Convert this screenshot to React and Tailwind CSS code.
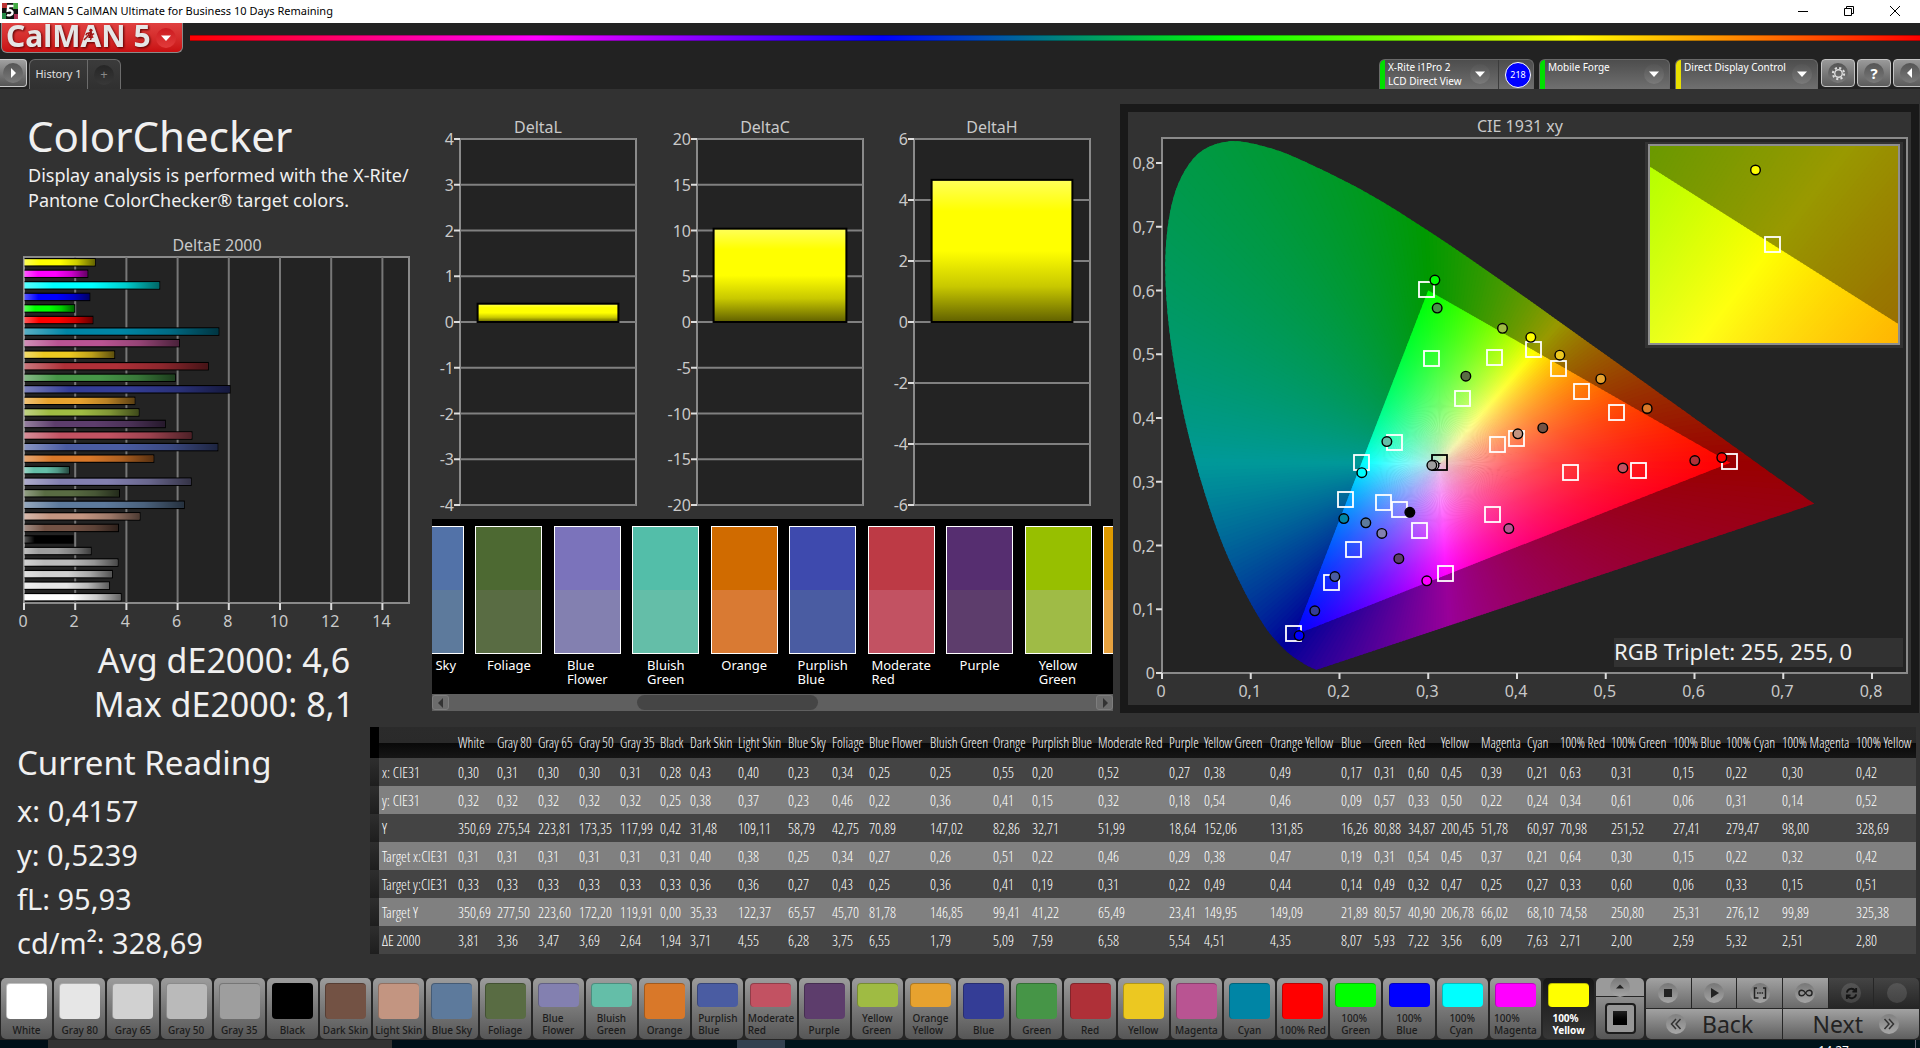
import React from "react";

const COLORS = [
  ["White", "#ffffff", 3.81, 458],
  ["Gray 80", "#e6e6e6", 3.36, 497],
  ["Gray 65", "#d1d1d1", 3.47, 538],
  ["Gray 50", "#bababa", 3.69, 579],
  ["Gray 35", "#9e9e9e", 2.64, 620],
  ["Black", "#000000", 1.94, 660],
  ["Dark Skin", "#735244", 3.71, 690],
  ["Light Skin", "#c39581", 4.55, 738],
  ["Blue Sky", "#5d7a9c", 6.28, 788],
  ["Foliage", "#596c43", 3.75, 832],
  ["Blue\nFlower", "#8380b0", 6.55, 869],
  ["Bluish\nGreen", "#64bea8", 1.79, 930],
  ["Orange", "#d97829", 5.09, 993],
  ["Purplish\nBlue", "#4a5ca2", 7.59, 1032],
  ["Moderate\nRed", "#c25262", 6.58, 1098],
  ["Purple", "#5d3d6c", 5.54, 1169],
  ["Yellow\nGreen", "#9fbb43", 4.51, 1204],
  ["Orange\nYellow", "#e7a22f", 4.35, 1270],
  ["Blue", "#343d96", 8.07, 1341],
  ["Green", "#469547", 5.93, 1374],
  ["Red", "#af3038", 7.22, 1408],
  ["Yellow", "#ecc821", 3.56, 1441],
  ["Magenta", "#b95492", 6.09, 1481],
  ["Cyan", "#0085a5", 7.63, 1527],
  ["100% Red", "#ff0000", 2.71, 1560],
  ["100%\nGreen", "#00ff00", 2.0, 1611],
  ["100%\nBlue", "#0000ff", 2.59, 1673],
  ["100%\nCyan", "#00ffff", 5.32, 1726],
  ["100%\nMagenta", "#ff00ff", 2.51, 1782],
  ["100%\nYellow", "#ffff00", 2.8, 1856],
];

const ROWS = [
  ["x: CIE31", "0,30 0,31 0,30 0,30 0,31 0,28 0,43 0,40 0,23 0,34 0,25 0,25 0,55 0,20 0,52 0,27 0,38 0,49 0,17 0,31 0,60 0,45 0,39 0,21 0,63 0,31 0,15 0,22 0,30 0,42"],
  ["y: CIE31", "0,32 0,32 0,32 0,32 0,32 0,25 0,38 0,37 0,23 0,46 0,22 0,36 0,41 0,15 0,32 0,18 0,54 0,46 0,09 0,57 0,33 0,50 0,22 0,24 0,34 0,61 0,06 0,31 0,14 0,52"],
  ["Y", "350,69 275,54 223,81 173,35 117,99 0,42 31,48 109,11 58,79 42,75 70,89 147,02 82,86 32,71 51,99 18,64 152,06 131,85 16,26 80,88 34,87 200,45 51,78 60,97 70,98 251,52 27,41 279,47 98,00 328,69"],
  ["Target x:CIE31", "0,31 0,31 0,31 0,31 0,31 0,31 0,40 0,38 0,25 0,34 0,27 0,26 0,51 0,22 0,46 0,29 0,38 0,47 0,19 0,31 0,54 0,45 0,37 0,21 0,64 0,30 0,15 0,22 0,32 0,42"],
  ["Target y:CIE31", "0,33 0,33 0,33 0,33 0,33 0,33 0,36 0,36 0,27 0,43 0,25 0,36 0,41 0,19 0,31 0,22 0,49 0,44 0,14 0,49 0,32 0,47 0,25 0,27 0,33 0,60 0,06 0,33 0,15 0,51"],
  ["Target Y", "350,69 277,50 223,60 172,20 119,91 0,00 35,33 122,37 65,57 45,70 81,78 146,85 99,41 41,22 65,49 23,41 149,95 149,09 21,89 80,57 40,90 206,78 66,02 68,10 74,58 250,80 25,31 276,12 99,89 325,38"],
  ["ΔE 2000", "3,81 3,36 3,47 3,69 2,64 1,94 3,71 4,55 6,28 3,75 6,55 1,79 5,09 7,59 6,58 5,54 4,51 4,35 8,07 5,93 7,22 3,56 6,09 7,63 2,71 2,00 2,59 5,32 2,51 2,80"],
];

/* ---------- shared bits ---------- */

function Disc({ children, className = "" }) {
  return (
    <span
      className={
        "flex size-5 shrink-0 items-center justify-center rounded-full bg-linear-to-b from-[#555] to-[#7a7a7a] " + className
      }
    >
      {children}
    </span>
  );
}

function Triangle({ d, className, w = 10, h = 10 }) {
  return (
    <svg viewBox="0 0 10 10" width={w} height={h} className={className} aria-hidden="true">
      <path d={d} fill="currentColor" />
    </svg>
  );
}
const DOWN = "M0 2.5h10L5 8z";

/* ---------- header ---------- */

function TitleBar() {
  return (
    <div className="flex h-[23px] items-center bg-white text-black">
      <svg width="16" height="16" viewBox="0 0 16 16" className="mb-0.5 ml-0.5" aria-hidden="true">
        <rect width="16" height="16" fill="#111" />
        <path d="M0 0h5v5H0z" fill="#b33" />
        <path d="M11 0h5v6h-5z" fill="#4a4" />
        <path d="M0 10h4v6H0z" fill="#284" />
        <path d="M12 11h4v5h-4z" fill="#a35" />
        <path d="M11.500 3H6.300L5.800 7.600C9 6.600 10.800 8 10.500 10c-.3 2.300-3.500 3-5.500 1.700" fill="none" stroke="#fff" strokeWidth="2.400" />
      </svg>
      <span className="mb-0.5 ml-[5px] text-[11px] leading-4">CalMAN 5 CalMAN Ultimate for Business 10 Days Remaining</span>
      <div className="ml-auto flex h-full pb-0.5">
        <button aria-label="Minimize" className="flex w-[46px] items-center justify-center">
          <svg width="10" height="10" viewBox="0 0 10 10"><path d="M0 5.5h10" stroke="#000" /></svg>
        </button>
        <button aria-label="Restore" className="flex w-[46px] items-center justify-center">
          <svg width="10" height="10" viewBox="0 0 10 10" fill="none" stroke="#000">
            <path d="M.5 2.5h7v7h-7zM2.5 2.5v-2h7v7h-2" />
          </svg>
        </button>
        <button aria-label="Close" className="mr-[2px] flex w-[46px] items-center justify-center">
          <svg width="10" height="10" viewBox="0 0 10 10"><path d="M0 0l10 10M10 0L0 10" stroke="#000" /></svg>
        </button>
      </div>
    </div>
  );
}

function DeviceTab({ lines, bar, width, badge, label }) {
  return (
    <div className={"flex h-[30px] rounded-t-md border border-b-0 border-[#6a6a6a] bg-linear-to-b from-[#4d4d4d] to-[#707070] " + width}>
      <button aria-label={label} className="flex min-w-0 flex-1 items-stretch text-left">
        <span className={"w-[5px] shrink-0 rounded-tl-[5px] " + bar} />
        <span className="flex-1 pl-[3px] text-[10px] leading-[14px] whitespace-pre text-white">{lines}</span>
        <Disc className={"mt-1 from-[#444] to-[#6c6c6c] " + (badge ? "mr-2" : "mr-[5px]")}><Triangle d={DOWN} className="text-white" /></Disc>
      </button>
      {badge && (
        <span className="flex items-center border-l border-[#3c3c3c] pr-[2px] pl-[6px]">
          <span className="flex size-[26px] items-center justify-center rounded-full border border-white bg-[#0000ff] text-[9px] leading-3 text-white">{badge}</span>
        </span>
      )}
    </div>
  );
}

function SquareButton({ label, children }) {
  return (
    <button
      aria-label={label}
      className="flex h-[28px] w-[34px] items-center justify-center rounded-[4px] border border-[#c4c4c4] bg-linear-to-b from-[#9a9a9a] to-[#5c5c5c] text-white"
    >
      <Disc>{children}</Disc>
    </button>
  );
}

function Header() {
  return (
    <header className="flex h-[66px] flex-col justify-between bg-[#222]">
      <div className="flex">
        <button
          aria-label="CalMAN 5 menu"
          className="relative ml-px flex h-[30px] w-[182px] items-center justify-between rounded-b-md border border-t-0 border-[#8a8a8a] bg-linear-to-b from-[#e04040] to-[#c90d10] pr-[6px] pl-1"
        >
          <span className="pb-1 text-[30px] leading-[30px] font-bold whitespace-nowrap text-[#e6e6e6] drop-shadow-[1px_1px_1px_#500]">CalMAN 5</span>
          <svg viewBox="0 0 14 14" width="13" height="13" className="absolute top-[5px] left-[81px]" aria-hidden="true">
            <path d="M1 13l4-4 2-4-3 1-1 2M7 5l3 2 2-1M6 8l3 2-1 3" fill="none" stroke="#a01515" strokeWidth="1.500" />
            <circle cx="8.500" cy="2.500" r="1.800" fill="#a01515" />
          </svg>
          <Disc className="from-[#cc1a20] to-[#e23a3a]"><Triangle d={DOWN} className="text-white" /></Disc>
        </button>
        <div className="mt-3 ml-[7px] h-[6px] flex-1 border-y border-black/30 bg-linear-[to_right,#f00,#f0f_20%,#00f_40%,#0f0_60%,#ff0_80%,#f00]" />
      </div>
      <div className="flex items-end">
        <button aria-label="Expand panel" className="mb-[2px] flex h-[28px] w-[27px] items-center justify-center rounded-r-[4px] border border-l-0 border-[#c8c8c8] bg-linear-to-b from-[#a0a0a0] to-[#555] text-white">
          <Disc><Triangle d="M3 0v10l5-5z" /></Disc>
        </button>
        <div className="ml-[2px] flex h-[30px] rounded-t-md border border-b-0 border-[#6c6c6c] bg-linear-to-b from-[#3b3b3b] to-[#303030]">
          <button className="w-[58px] border-r border-[#6c6c6c] text-[11px] text-[#e0e0e0]">History 1</button>
          <button aria-label="Add tab" className="flex w-[32px] items-center justify-center">
            <Disc className="from-[#262626] to-[#383838] text-[13px] text-[#888]">+</Disc>
          </button>
        </div>
        <div className="ml-auto flex gap-[5px]">
          <DeviceTab label="Meter" lines={"X-Rite i1Pro 2\nLCD Direct View"} bar="bg-[#00e000]" width="w-[155px]" badge="218" />
          <DeviceTab label="Source" lines="Mobile Forge" bar="bg-[#00e000]" width="w-[131px]" />
          <DeviceTab label="Display" lines="Direct Display Control" bar="bg-[#e8e000]" width="w-[143px]" />
        </div>
        <div className="-mr-[7px] mb-[2px] ml-[3px] flex gap-[2px]">
          <SquareButton label="Settings">
            <svg viewBox="0 0 16 16" width="15" height="15" aria-hidden="true">
              <circle cx="8" cy="8" r="4" fill="none" stroke="#ddd" strokeWidth="1.500" />
              <circle cx="8" cy="8" r="6" fill="none" stroke="#ddd" strokeWidth="2.200" strokeDasharray="2.300 2.412" />
            </svg>
          </SquareButton>
          <SquareButton label="Help"><span className="text-[15px] font-bold">?</span></SquareButton>
          <SquareButton label="Collapse panel"><Triangle d="M7 0v10L2 5z" /></SquareButton>
        </div>
      </div>
    </header>
  );
}

/* ---------- charts ---------- */

const TEXT = { fontFamily: '"Noto Sans", sans-serif', fontSize: 16, fill: "#c9c9c9" };

function DeltaEChart() {
  const bars = [...COLORS].reverse();
  const x = (v) => 24 + v * 25.6;
  return (
    <svg viewBox="0 0 430 422" className="block h-auto w-full" role="img" aria-label="DeltaE 2000">
      <defs>
        <linearGradient id="barShade">
          <stop offset="0" stopColor="#fff" stopOpacity="0.35" />
          <stop offset="0.22" stopColor="#fff" stopOpacity="0" />
          <stop offset="0.5" stopColor="#000" stopOpacity="0" />
          <stop offset="0.75" stopColor="#000" stopOpacity="0.2" />
          <stop offset="1" stopColor="#000" stopOpacity="0.6" />
        </linearGradient>
      </defs>
      <text {...TEXT} x="217" y="38" textAnchor="middle">DeltaE 2000</text>
      <rect x="24" y="44" width="385" height="346" fill="#232323" stroke="#8a8a8a" strokeWidth="2" />
      {[0, 2, 4, 6, 8, 10, 12, 14].map((v) => (
        <g key={v}>
          <path d={`M${x(v)} 44V390`} stroke="#777" strokeWidth="2" />
          <path d={`M${x(v)} 390V397`} stroke="#ddd" strokeWidth="2" />
          <text {...TEXT} x={x(v) - 1} y="414" textAnchor="middle">{v}</text>
        </g>
      ))}
      {bars.map(([name, color, v], i) => {
        const y = 45 + i * 11.55;
        return (
          <g key={name}>
            <rect x="24" y={y} width={v * 25.6} height="8.500" fill="#000" />
            <rect x="24" y={y + 1.2} width={v * 25.6 - 1} height="6.200" fill={color} />
            <rect x="24" y={y + 1.2} width={v * 25.6 - 1} height="6.200" fill="url(#barShade)" />
          </g>
        );
      })}
      <path d="M24 44V390" stroke="#aaa" strokeWidth="1" />
    </svg>
  );
}

function DeltaPlot({ title, titleX, left, right, ticks, value }) {
  const max = ticks[0];
  const y = (v) => 212 - (v / max) * 183;
  const pad = (right - left) * 0.1;
  return (
    <g>
      <text {...TEXT} x={titleX} y="23" textAnchor="middle">{title}</text>
      <rect x={left} y="29" width={right - left} height="366" fill="#232323" stroke="#8a8a8a" strokeWidth="2" />
      {ticks.map((t) => (
        <g key={t}>
          <path d={`M${left} ${y(t)}H${right}`} stroke="#808080" strokeWidth="2" />
          <path d={`M${left - 6} ${y(t)}H${left}`} stroke="#ddd" strokeWidth="2" />
          <text {...TEXT} x={left - 6} y={y(t) + 6} textAnchor="end">{t}</text>
        </g>
      ))}
      <rect x={left + pad} y={y(value)} width={right - left - 2 * pad} height={212 - y(value)} fill="url(#yellowBar)" stroke="#000" strokeWidth="2" />
    </g>
  );
}

function DeltaCharts() {
  return (
    <svg viewBox="0 0 690 405" className="block h-auto w-full" role="img" aria-label="DeltaL, DeltaC and DeltaH">
      <defs>
        <linearGradient id="yellowBar" x2="0" y2="1">
          <stop offset="0" stopColor="#ffff5a" />
          <stop offset="0.22" stopColor="#ffff00" />
          <stop offset="0.5" stopColor="#ffff00" />
          <stop offset="0.75" stopColor="#c8c800" />
          <stop offset="1" stopColor="#606000" />
        </linearGradient>
      </defs>
      <DeltaPlot title="DeltaL" titleX={108} left={30} right={206} ticks={[4, 3, 2, 1, 0, -1, -2, -3, -4]} value={0.4} />
      <DeltaPlot title="DeltaC" titleX={335} left={267} right={433} ticks={[20, 15, 10, 5, 0, -5, -10, -15, -20]} value={10.2} />
      <DeltaPlot title="DeltaH" titleX={562} left={484} right={660} ticks={[6, 4, 2, 0, -2, -4, -6]} value={4.66} />
    </svg>
  );
}

/* ---------- chromaticity diagram ---------- */

const px = (x) => 34 + x * 887.5;
const py = (y) => 561 - y * 637.5;
const WP = [0.3127, 0.329];
const LOCUS = [
  [0.1741, 0.005], [0.1644, 0.0109], [0.1566, 0.0177], [0.144, 0.0297], [0.1241, 0.0578], [0.1096, 0.0868],
  [0.0913, 0.1327], [0.0687, 0.2007], [0.0454, 0.295], [0.0235, 0.4127], [0.0082, 0.5384], [0.0039, 0.6548],
  [0.0139, 0.7502], [0.0389, 0.812], [0.0743, 0.8338], [0.1142, 0.8262], [0.1547, 0.8059], [0.2296, 0.7543],
  [0.3016, 0.6923], [0.3731, 0.6245], [0.4441, 0.5547], [0.5125, 0.4866], [0.5752, 0.4242], [0.627, 0.3725],
  [0.6915, 0.3083], [0.7347, 0.2653],
];

function smoothPath(points) {
  const p = points.map(([x, y]) => [px(x), py(y)]);
  let d = `M${p[0]}`;
  for (let i = 0; i < p.length - 1; i++) {
    const a = p[Math.max(i - 1, 0)], b = p[i], c = p[i + 1], e = p[Math.min(i + 2, p.length - 1)];
    d += `C${b[0] + (c[0] - a[0]) / 6} ${b[1] + (c[1] - a[1]) / 6} ${c[0] - (e[0] - b[0]) / 6} ${c[1] - (e[1] - b[1]) / 6} ${c[0]} ${c[1]}`;
  }
  return d + "Z";
}

function linearRgb(x, y) {
  const z = 1 - x - y;
  return [3.2406 * x - 1.5372 * y - 0.4986 * z, -0.9689 * x + 1.8758 * y + 0.0415 * z, 0.0557 * x - 0.204 * y + 1.057 * z];
}

function css(rgb, level) {
  const c = rgb.map((v) => Math.max(v, 0));
  const m = Math.max(...c);
  return `rgb(${c.map((v) => Math.round((v / m) * level)).join(",")})`;
}

function Gamut({ id, from, to, step }) {
  const cx = px(WP[0]), cy = py(WP[1]);
  const base = linearRgb(...WP);
  const rays = [];
  for (let a = from; a < to; a += step) {
    const mid = ((a + step / 2) * Math.PI) / 180;
    const ux = Math.cos(mid), uy = -Math.sin(mid);
    const far = linearRgb(WP[0] + ux / 887.5, WP[1] - uy / 637.5);
    const slope = far.map((v, i) => v - base[i]);
    const edge = Math.min(...slope.map((s, i) => (s < 0 ? -base[i] / s : Infinity)));
    const at = (t) => base.map((v, i) => v + slope[i] * t);
    const a0 = ((a - step * 0.3) * Math.PI) / 180, a1 = ((a + step * 1.3) * Math.PI) / 180;
    const R = 800;
    rays.push({
      key: a,
      points: `${cx},${cy} ${cx + R * Math.cos(a0)},${cy - R * Math.sin(a0)} ${cx + R * Math.cos(a1)},${cy - R * Math.sin(a1)}`,
      dim: css(at(edge), 153),
      x2: cx + ux * edge,
      y2: cy + uy * edge,
      stops: [0, 0.12, 0.25, 0.4, 0.6, 0.8, 1].map((f) => [f, css(at(edge * f), 255)]),
    });
  }
  const tri = [[0.64, 0.33], [0.3, 0.6], [0.15, 0.06]].map(([x, y]) => `${px(x)},${py(y)}`).join(" ");
  return (
    <g>
      <defs>
        <clipPath id={id + "Locus"}><path d={smoothPath(LOCUS)} /></clipPath>
        <clipPath id={id + "Tri"}><polygon points={tri} /></clipPath>
        {rays.map((r, i) => (
          <linearGradient key={r.key} id={`${id}g${i}`} gradientUnits="userSpaceOnUse" x1={cx} y1={cy} x2={r.x2} y2={r.y2}>
            {r.stops.map(([o, c]) => <stop key={o} offset={o} stopColor={c} />)}
          </linearGradient>
        ))}
      </defs>
      <g clipPath={`url(#${id}Locus)`}>
        {rays.map((r) => <polygon key={r.key} points={r.points} fill={r.dim} />)}
      </g>
      <g clipPath={`url(#${id}Tri)`}>
        {rays.map((r, i) => <polygon key={r.key} points={r.points} fill={`url(#${id}g${i})`} />)}
      </g>
    </g>
  );
}

const TARGETS = [
  [0.298, 0.603], [0.3035, 0.4936], [0.3745, 0.4955], [0.3384, 0.4308], [0.2614, 0.363], [0.2242, 0.3307],
  [0.2066, 0.2728], [0.249, 0.2684], [0.2667, 0.2569], [0.2896, 0.2239], [0.2156, 0.194], [0.1908, 0.1427],
  [0.148, 0.0634], [0.3192, 0.1562], [0.3722, 0.2495], [0.3778, 0.3587], [0.3989, 0.368], [0.4184, 0.5076],
  [0.4466, 0.4778], [0.4725, 0.4424], [0.5119, 0.4101], [0.4601, 0.3148], [0.5367, 0.319], [0.6389, 0.3332],
];
const READINGS = [
  [0.3069, 0.6163, "#00ff00"], [0.3095, 0.5724, "#469547"], [0.3831, 0.5407, "#9fbb43"], [0.3418, 0.4656, "#596c43"],
  [0.2528, 0.363, "#64bea8"], [0.2246, 0.3143, "#00ffff"], [0.2043, 0.2422, "#0085a5"], [0.2291, 0.2355, "#5d7a9c"],
  [0.2471, 0.219, "#8380b0"], [0.2787, 0.252, "#000000"], [0.2663, 0.1794, "#5d3d6c"], [0.1942, 0.1512, "#4a5ca2"],
  [0.1716, 0.0976, "#343d96"], [0.154, 0.0587, "#0000ff"], [0.2978, 0.1446, "#ff00ff"], [0.3902, 0.2265, "#b95492"],
  [0.4004, 0.3752, "#c39581"], [0.306, 0.326, "#d1d1d1"], [0.3035, 0.3258, "#9e9e9e"], [0.415, 0.5266, "#ffff00"],
  [0.4477, 0.4985, "#ecc821"], [0.4939, 0.4613, "#e7a22f"], [0.5461, 0.4149, "#d97829"], [0.4285, 0.3844, "#735244"],
  [0.5187, 0.3216, "#c25262"], [0.5998, 0.3332, "#af3038"], [0.6302, 0.3379, "#ff0000"],
];

function Target({ x, y, color = "#fff" }) {
  return <rect x={Math.round(x) - 7} y={Math.round(y) - 7} width="15" height="15" fill="none" stroke={color} strokeWidth="1.800" />;
}
function Reading({ x, y, color }) {
  return <circle cx={x + 0.5} cy={y} r="4.800" fill={color} stroke="#000" strokeWidth="1.400" />;
}

function CieChart() {
  return (
    <svg viewBox="0 0 783 593" className="block h-auto w-full" role="img" aria-label="CIE 1931 xy">
      <text {...TEXT} x="392" y="20" textAnchor="middle">CIE 1931 xy</text>
      <rect x="34" y="26" width="745" height="535" fill="#232323" stroke="#8a8a8a" strokeWidth="2" />
      {[0, 1, 2, 3, 4, 5, 6, 7, 8].map((n) => {
        const label = n === 0 ? "0" : `0,${n}`;
        return (
          <g key={n}>
            <path d={`M${px(n / 10)} 561v6M28 ${py(n / 10)}h6`} stroke="#ddd" strokeWidth="2" />
            <text {...TEXT} x={px(n / 10) - 1} y="585" textAnchor="middle">{label}</text>
            <text {...TEXT} x="27" y={py(n / 10) + 6} textAnchor="end">{label}</text>
          </g>
        );
      })}
      <Gamut id="main" from={0} to={360} step={1} />
      {TARGETS.map(([x, y]) => <Target key={`${x},${y}`} x={px(x)} y={py(y)} />)}
      <Target x={px(0.3125)} y={py(0.3307)} color="#000" />
      {READINGS.map(([x, y, c]) => <Reading key={`${x},${y}`} x={px(x)} y={py(y)} color={c} />)}

      <rect x="517" y="30" width="258" height="206" fill="#323232" />
      <clipPath id="inset"><rect x="521" y="34" width="250" height="199" /></clipPath>
      <g clipPath="url(#inset)">
        <g transform={`translate(644 132) scale(5.500 6.100) translate(${-px(0.4193)} ${-py(0.5053)})`}>
          <Gamut id="zoom" from={20} to={100} step={0.25} />
        </g>
      </g>
      <rect x="521" y="33" width="250" height="199" fill="none" stroke="#8e8e8e" strokeWidth="2" />
      <Target x={644} y={132} />
      <Reading x={627} y={58} color="#ffff00" />

      <rect x="486" y="526" width="289" height="29" fill="#323232" />
      <text {...TEXT} x="486" y="548" style={{ fontSize: 22 }} fill="#f0f0f0">RGB Triplet: 255, 255, 0</text>
    </svg>
  );
}

/* ---------- swatch strip ---------- */

const SWATCHES = [
  ["Blue Sky", "#5272a8", "#5d7a9c"], ["Foliage", "#4d6932", "#596c43"], ["Blue\nFlower", "#7b73bb", "#8380b0"],
  ["Bluish\nGreen", "#53bea9", "#64bea8"], ["Orange", "#d06b00", "#d97a33"], ["Purplish\nBlue", "#3e4aae", "#4a5ca2"],
  ["Moderate\nRed", "#bd3a45", "#c25262"], ["Purple", "#562e70", "#5d3d6c"], ["Yellow\nGreen", "#97bf00", "#9fbb46"],
  ["Orange\nYellow", "#dd9900", "#e7a23f"],
];

function SwatchStrip() {
  return (
    <div className="mt-1 mr-[7px] ml-[2px]">
      <div className="overflow-hidden bg-black pt-[7px]">
        <ul className="-ml-[35px] flex h-[168px] w-[773px] justify-between">
          {SWATCHES.map(([name, top, bottom]) => (
            <li key={name} className="flex w-[67px] shrink-0 flex-col items-center">
              <span className="flex h-[128px] w-full flex-col border border-white">
                <span className="flex-1" style={{ background: top }} />
                <span className="flex-1" style={{ background: bottom }} />
              </span>
              <span className="mt-1 text-[13px] leading-[14px] whitespace-pre text-white">{name}</span>
            </li>
          ))}
        </ul>
      </div>
      <div className="flex h-[17px] items-center justify-between bg-[#5f5f5f]">
        <button aria-label="Scroll left" className="flex h-[15px] w-[17px] items-center justify-center rounded-[3px] border border-[#7d7d7d] bg-[#6c6c6c] text-[#333]">
          <Triangle d="M7 0v10L2 5z" />
        </button>
        <div className="flex h-[15px] flex-1">
          <div className="ml-[29%] w-[28%] rounded-lg bg-[#454545]" />
        </div>
        <button aria-label="Scroll right" className="flex h-[15px] w-[17px] items-center justify-center rounded-[3px] border border-[#7d7d7d] bg-[#6c6c6c] text-[#333]">
          <Triangle d="M3 0v10l5-5z" />
        </button>
      </div>
    </div>
  );
}

/* ---------- results table ---------- */

const TABLE_WIDTH = 1546;
const STARTS = COLORS.map((c) => c[3] - 3);
const WIDTHS = [9, 76, ...STARTS.map((s, i) => (STARTS[i + 1] ?? 1916) - s)];

function ResultsTable() {
  return (
    <table className="mr-1 min-w-0 flex-1 table-fixed border-collapse self-start text-left font-['Open_Sans_Condensed_Light','Open_Sans_Condensed','Open_Sans',sans-serif] text-[15px] whitespace-nowrap text-white">
      <colgroup>
        {WIDTHS.map((w, i) => <col key={i} style={{ width: `${(w / TABLE_WIDTH) * 100}%` }} />)}
      </colgroup>
      <thead>
        <tr className="h-[31px] bg-linear-[to_bottom,#2b2b2b,#2a2a2a_50%,#080808_50%,#161616] text-[14px]">
          <td className="bg-black p-0" />
          <td className="p-0" />
          {COLORS.map(([name]) => (
            <th key={name} scope="col" className="p-0 pl-[3px] font-normal">{name.replace("\n", " ")}</th>
          ))}
        </tr>
      </thead>
      <tbody>
        {ROWS.map(([name, values]) => (
          <tr key={name} className="h-[28px] bg-[#444] even:bg-[#808080]">
            <td className="bg-linear-to-b from-[#2e2e2e] to-[#1e1e1e] p-0" />
            <th scope="row" className="p-0 pl-[3px] font-normal">{name}</th>
            {values.split(" ").map((v, i) => <td key={i} className="p-0 pl-[3px]">{v}</td>)}
          </tr>
        ))}
      </tbody>
    </table>
  );
}

/* ---------- bottom bar ---------- */

function PatchButton({ name, color, active }) {
  const two = name.includes("\n");
  return (
    <button
      aria-pressed={active}
      className={
        "flex h-[61px] min-w-0 flex-1 flex-col items-center justify-between overflow-hidden rounded-[5px] pt-[5px] pb-[3px] " +
        (active ? "bg-linear-to-b from-[#161616] to-[#363636] font-bold text-white" : "bg-linear-to-b from-[#9c9c9c] to-[#565656] font-medium text-[#1c1c1c]")
      }
    >
      <span
        className={"w-[41px] shrink-0 rounded-[4px] border-t border-l border-black/25 " + (two ? "h-6" : "h-9")}
        style={{ background: color }}
      />
      <span className="text-left text-[10px] leading-3 whitespace-pre">{name}</span>
    </button>
  );
}

function ToolButton({ label, dim, children }) {
  return (
    <button
      aria-label={label}
      className={
        "flex flex-1 items-center justify-center text-[#222] " +
        (dim ? "bg-linear-to-b from-[#444] to-[#262626]" : "bg-linear-to-b from-[#a2a2a2] to-[#6a6a6a]")
      }
    >
      <Disc className={dim ? "from-[#2c2c2c] to-[#444]" : "from-[#777] to-[#a5a5a5]"}>{children}</Disc>
    </button>
  );
}

function Chevrons({ flip }) {
  return (
    <svg viewBox="0 0 14 14" width="14" height="14" className={flip ? "rotate-180" : ""} aria-hidden="true">
      <path d="M7 2L2.500 7 7 12M11.500 2L7 7l4.500 5" fill="none" stroke="#333" strokeWidth="1.500" />
    </svg>
  );
}

function BottomBar() {
  return (
    <footer className="flex h-[62px] gap-[2px] bg-[#262626] px-px pb-px">
      <div className="flex min-w-0 flex-1 gap-[2px]">
        {COLORS.map(([name, color], i) => <PatchButton key={name} name={name} color={color} active={i === COLORS.length - 1} />)}
      </div>
      <div className="flex w-[48px] flex-col gap-px overflow-hidden rounded-[5px]">
        <button aria-label="Show more" className="flex h-[18px] items-center justify-center bg-[#9a9a9a] text-[#222]">
          <Disc className="size-4 from-[#777] to-[#a5a5a5]"><Triangle d="M0 7h10L5 2z" w={8} h={8} /></Disc>
        </button>
        <button aria-label="Pattern window" className="flex flex-1 items-center justify-center bg-linear-to-b from-[#8e8e8e] to-[#555]">
          <span className="flex size-[31px] items-center justify-center rounded-[4px] border-2 border-[#1c1c1c] bg-[#969696]">
            <span className="size-[14px] bg-linear-to-b from-[#222] to-black" />
          </span>
        </button>
      </div>
      <div className="flex w-[273px] flex-col gap-px overflow-hidden rounded-[5px]">
        <div className="flex h-[30px] gap-px">
          <ToolButton label="Stop"><span className="size-2 bg-[#222]" /></ToolButton>
          <ToolButton label="Play"><Triangle d="M2 0v10l8-5z" /></ToolButton>
          <ToolButton label="Read series">
            <svg viewBox="0 0 14 12" width="14" height="12" fill="none" stroke="#222" strokeWidth="1.500">
              <path d="M4 1H1.500v10h4M10 1h2.500v10H10M4 6h1.500M6.300 6h1.500M8.600 6h1.500" />
            </svg>
          </ToolButton>
          <ToolButton label="Continuous">
            <svg viewBox="0 0 16 8" width="15" height="8" fill="none" stroke="#222" strokeWidth="1.500">
              <path d="M8 4C6.500 1.500 5.500 1 4 1a3 3 0 0 0 0 6c1.500 0 2.500-.5 4-3s2.500-3 4-3a3 3 0 0 1 0 6c-1.500 0-2.500-.5-4-3z" />
            </svg>
          </ToolButton>
          <ToolButton label="Refresh" dim>
            <svg viewBox="0 0 14 14" width="13" height="13" fill="none" stroke="#151515" strokeWidth="2">
              <path d="M2 6a5 5 0 0 1 9-2M12 8a5 5 0 0 1-9 2M12 1v4H8M2 13V9h4" />
            </svg>
          </ToolButton>
          <ToolButton label="Blank" dim />
        </div>
        <div className="flex flex-1 gap-px text-[23px] leading-none text-[#222]">
          <button className="flex flex-1 items-center gap-4 bg-linear-to-b from-[#a2a2a2] to-[#5f5f5f] pl-5">
            <Disc className="from-[#808080] to-[#a8a8a8]"><Chevrons /></Disc>
            Back
          </button>
          <button className="flex flex-1 items-center justify-end gap-4 bg-linear-to-b from-[#a2a2a2] to-[#5f5f5f] pr-5">
            Next
            <Disc className="from-[#808080] to-[#a8a8a8]"><Chevrons flip /></Disc>
          </button>
        </div>
      </div>
    </footer>
  );
}

export default function App() {
  return (
    <div className="flex min-h-screen flex-col overflow-x-clip bg-[#222] font-['Noto_Sans',sans-serif]">
      <TitleBar />
      <Header />
      <main className="flex-1 bg-[#323232] text-[#f0f0f0]">
        <div className="grid grid-cols-[430fr_690fr_800fr]">
          <section className="min-w-0 pt-[21px]">
            <h1 className="pl-[27px] text-[42px] leading-[52px]">ColorChecker</h1>
            <p className="pt-px pl-7 text-[18px] leading-[25px] whitespace-nowrap">
              Display analysis is performed with the X-Rite/
              <br />
              Pantone ColorChecker® target colors.
            </p>
            <DeltaEChart />
            <div className="pt-[3px] pl-[18px] text-center text-[34px] leading-[44px]">
              <p>Avg dE2000: 4,6</p>
              <p>Max dE2000: 8,1</p>
            </div>
          </section>
          <section className="min-w-0 pt-[21px]">
            <DeltaCharts />
            <SwatchStrip />
          </section>
          <section className="min-w-0 pt-[15px] pr-px">
            <div className="border-8 border-[#191919]">
              <CieChart />
            </div>
          </section>
        </div>
        <div className="flex pt-px">
          <section className="w-[370px] shrink-0 pt-[14px] pl-[17px] text-[29px] leading-[44px]">
            <h2 className="mb-1 text-[33px]">Current Reading</h2>
            <p>x: 0,4157</p>
            <p>y: 0,5239</p>
            <p>fL: 95,93</p>
            <p>cd/m²: 328,69</p>
          </section>
          <ResultsTable />
        </div>
      </main>
      <BottomBar />
      <div className="flex h-2 overflow-hidden bg-[#00141b]">
        <span className="w-[48px] bg-[#000f18]" />
        <span className="w-[344px] bg-[#323232]" />
        <span className="w-[345px] bg-[#000f18]" />
        <span className="w-[48px] bg-[#334150]" />
        <span className="mt-[3px] mr-[66px] ml-auto text-[12px] leading-4 text-white">14:27</span>
        <span className="mr-[4px] w-px bg-[#667]" />
      </div>
    </div>
  );
}
